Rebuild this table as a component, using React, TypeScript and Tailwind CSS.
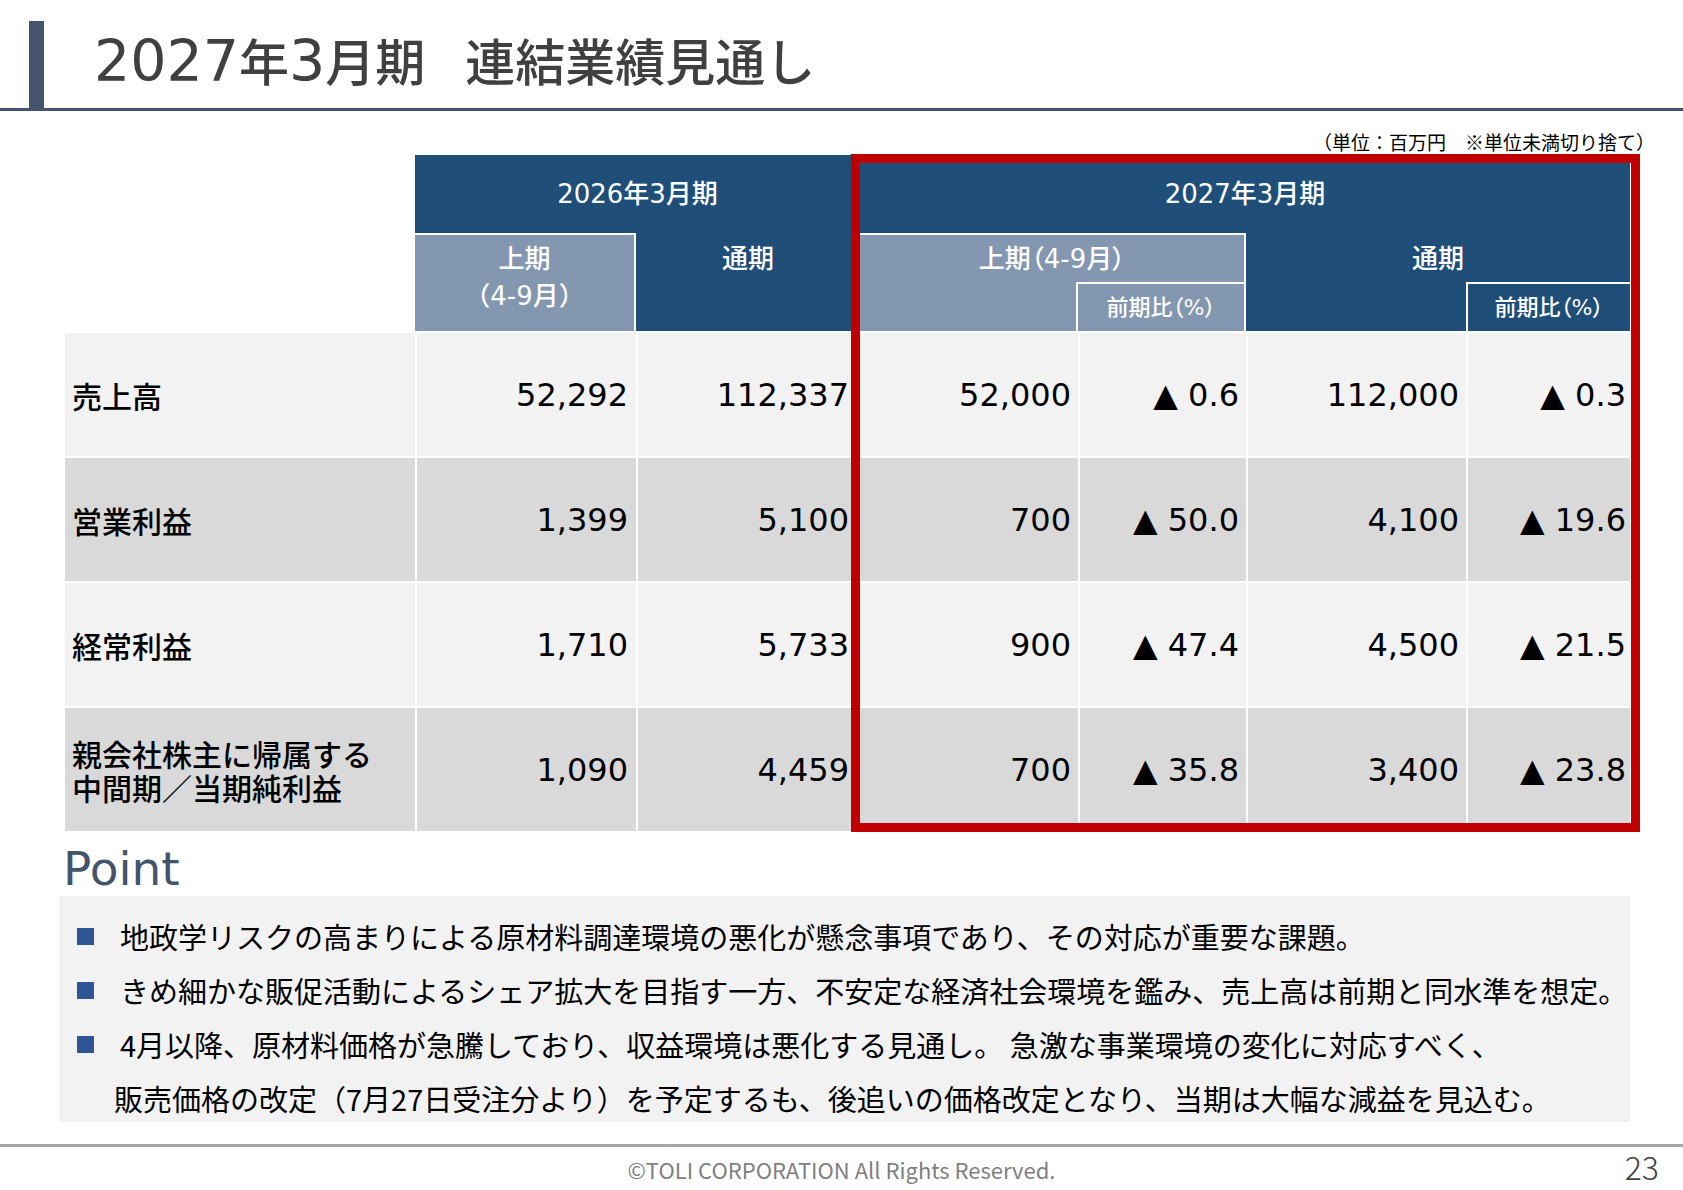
const jp = "font-['Noto_Sans_CJK_JP',sans-serif]";
const num = "font-['DejaVu_Sans','Noto_Sans_CJK_JP',sans-serif]";

type Row = {
  label: string;
  values: string[];
  bg: string;
};

const rows: Row[] = [
  {
    label: "売上高",
    values: ["52,292", "112,337", "52,000", "▲ 0.6", "112,000", "▲ 0.3"],
    bg: "bg-[#f2f2f2]",
  },
  {
    label: "営業利益",
    values: ["1,399", "5,100", "700", "▲ 50.0", "4,100", "▲ 19.6"],
    bg: "bg-[#d9d9d9]",
  },
  {
    label: "経常利益",
    values: ["1,710", "5,733", "900", "▲ 47.4", "4,500", "▲ 21.5"],
    bg: "bg-[#f2f2f2]",
  },
  {
    label: "親会社株主に帰属する\n中間期／当期純利益",
    values: ["1,090", "4,459", "700", "▲ 35.8", "3,400", "▲ 23.8"],
    bg: "bg-[#d9d9d9]",
  },
];

// widths and right paddings for the six number columns
const cols = [
  "w-[221px] border-l-2 border-white pr-[8px]",
  "w-[224px] border-l-2 border-white pr-[11px]",
  "w-[218px] pr-[7px]",
  "w-[168px] border-l-2 border-white pr-[7px]",
  "w-[220px] border-l-2 border-white pr-[7px]",
  "w-[164px] border-l-2 border-white pr-[4px]",
];

const points = [
  "地政学リスクの高まりによる原材料調達環境の悪化が懸念事項であり、その対応が重要な課題。",
  "きめ細かな販促活動によるシェア拡大を目指す一方、不安定な経済社会環境を鑑み、売上高は前期と同水準を想定。",
  "4月以降、原材料価格が急騰しており、収益環境は悪化する見通し。 急激な事業環境の変化に対応すべく、",
];

function HeaderTable() {
  return (
    <div className={`flex pl-[415px] font-medium text-white ${num}`}>
      {/* 2026年3月期 */}
      <div className="flex w-[445px] flex-col">
        <div className="flex h-[78px] items-center justify-center bg-[#1f4e79] text-[26px] leading-none">
          2026年3月期
        </div>
        <div className="flex h-[98px]">
          <div className="w-[221px] border-t-2 border-r-2 border-white bg-[#8497b0] pt-[6px] text-center text-[26px] leading-[37px] whitespace-pre-line">
            {"上期\n（4-9月）"}
          </div>
          <div className="flex-1 bg-[#1f4e79] pt-[8px] text-center text-[26px] leading-[37px]">
            通期
          </div>
        </div>
      </div>

      {/* 2027年3月期 */}
      <div className="flex w-[770px] flex-col">
        <div className="flex h-[78px] items-center justify-center bg-[#1f4e79] text-[26px] leading-none">
          2027年3月期
        </div>
        <div className="flex h-[98px]">
          <div className="flex w-[386px] flex-col border-t-2 border-r-2 border-white bg-[#8497b0]">
            <div className="h-[47px] pt-[6px] text-center text-[26px] leading-[37px] [font-feature-settings:'palt']">
              上期（4-9月）
            </div>
            <div className="flex flex-1">
              <div className="w-[216px]" />
              <div className="flex flex-1 items-center justify-center border-t-2 border-l-2 border-white text-[22px] [font-feature-settings:'palt']">
                前期比（%）
              </div>
            </div>
          </div>
          <div className="flex flex-1 flex-col bg-[#1f4e79]">
            <div className="h-[49px] pt-[8px] text-center text-[26px] leading-[37px]">
              通期
            </div>
            <div className="flex flex-1">
              <div className="w-[220px]" />
              <div className="flex flex-1 items-center justify-center border-t-2 border-l-2 border-white text-[22px] [font-feature-settings:'palt']">
                前期比（%）
              </div>
            </div>
          </div>
        </div>
      </div>
    </div>
  );
}

function BodyRow({ row }: { row: Row }) {
  return (
    <div className={`flex h-[125px] w-[1565px] border-t-2 border-white ${row.bg}`}>
      <div
        className={`flex w-[350px] items-center pl-[7px] text-[30px] leading-[34px] font-medium text-black ${jp}`}
      >
        <p className="whitespace-pre-line">{row.label}</p>
      </div>
      {row.values.map((v, i) => (
        <div
          key={i}
          className={`flex items-center justify-end text-[32px] text-black ${num} ${cols[i]}`}
        >
          {v}
        </div>
      ))}
    </div>
  );
}

export default function App() {
  return (
    <div className={`relative h-[1190px] w-[1683px] overflow-hidden bg-white ${jp}`}>
      {/* title */}
      <div className="flex h-[111px] items-start border-b-[3px] border-[#44546a] pt-[21px]">
        <div className="ml-[29px] h-[87px] w-[15px] bg-[#44546a]" />
        <h1 className={`ml-[50px] mt-[8px] flex items-baseline text-[50px] leading-[60px] font-medium text-[#404040] ${jp}`}>
          <span>
            <span className="font-['DejaVu_Sans'] text-[57px] font-normal">2027</span>年
            <span className="font-['DejaVu_Sans'] text-[57px] font-normal">3</span>月期
          </span>
          <span className="ml-[40px]">連結業績見通し</span>
        </h1>
      </div>

      {/* unit */}
      <div className="flex h-[44px] items-center justify-end pt-[16px] pr-[28px] text-[19px] leading-none text-black">
        （単位：百万円　※単位未満切り捨て）
      </div>

      {/* table */}
      <div className="relative">
        <HeaderTable />
        <div className="pl-[65px]">
          {rows.map((r) => (
            <BodyRow key={r.label} row={r} />
          ))}
        </div>
        {/* red highlight frame */}
        <div className="pointer-events-none absolute top-[-1px] left-[851px] h-[678px] w-[789px] border-[9px] border-[#c00000]" />
      </div>

      {/* point */}
      <div className="mt-[15px] pl-[63px] font-['DejaVu_Sans'] text-[47px] leading-[46px] text-[#44546a]">
        Point
      </div>
      <div className="mt-[4px] ml-[59px] h-[226px] w-[1571px] bg-[#f2f2f2] pt-[13px] text-[29px] leading-[54px] text-black">
        {points.map((p) => (
          <div key={p} className="flex items-center pl-[18px]">
            <span className="h-[17px] w-[17px] shrink-0 bg-[#2f5597]" />
            <span className="ml-[26px] whitespace-nowrap">{p}</span>
          </div>
        ))}
        <div className="pl-[55px] whitespace-nowrap">
          販売価格の改定（7月27日受注分より）を予定するも、後追いの価格改定となり、当期は大幅な減益を見込む。
        </div>
      </div>

      {/* footer */}
      <div className="mt-[22px] h-[3px] bg-[#a6a6a6]" />
      <div className="relative flex h-[43px] items-center justify-center">
        <span className="text-[22px] leading-none text-[#7f7f7f]">
          ©TOLI CORPORATION All Rights Reserved.
        </span>
        <span className="absolute top-[5px] right-[24px] text-[32px] leading-[28px] font-light text-[#404040]">
          23
        </span>
      </div>
    </div>
  );
}
